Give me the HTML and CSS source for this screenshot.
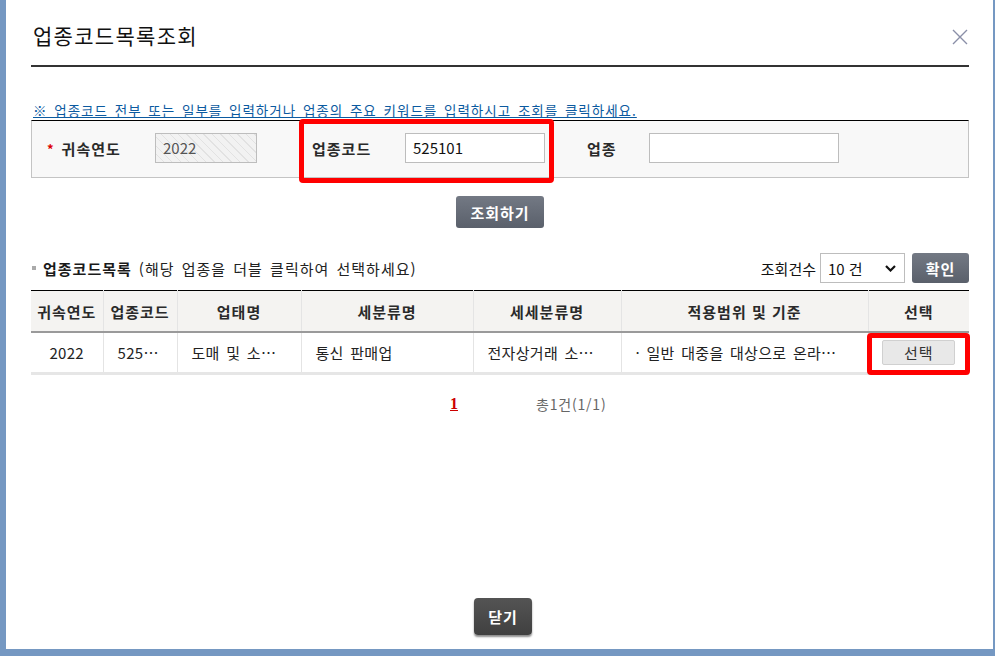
FILE: index.html
```html
<!DOCTYPE html>
<html lang="ko">
<head>
    <meta charset="UTF-8">
    <title>업종코드목록조회</title>
    <link rel="stylesheet" href="styles.css">
</head>
<body>

<div class="window">
    <div class="header">
        <div class="title">업종코드목록조회</div>
        <div class="close">
            <svg width="16" height="16" viewBox="0 0 16 16"><path d="M1 1 L15 15 M15 1 L1 15" stroke="#8a8fa8" stroke-width="1.4" fill="none"/></svg>
        </div>
    </div>

    <div class="notice">※ 업종코드 전부 또는 일부를 입력하거나 업종의 주요 키워드를 입력하시고 조회를 클릭하세요.</div>

    <div class="search-box">
        <div class="field">
            <div class="label label-year"><span class="req">*</span>귀속연도</div>
            <div class="input input-year readonly">2022</div>
        </div>
        <div class="field field-code">
            <div class="label label-code">업종코드</div>
            <div class="input input-code">525101</div>
        </div>
        <div class="field field-name">
            <div class="label label-name">업종</div>
            <div class="input input-name"></div>
        </div>
    </div>

    <div class="btn-row">
        <div class="btn btn-search">조회하기</div>
    </div>

    <div class="list-head">
        <div class="list-title"><span class="bullet"></span><b>업종코드목록</b> (해당 업종을 더블 클릭하여 선택하세요)</div>
        <div class="list-tools">
            <span class="count-label">조회건수</span>
            <div class="select">10 건
                <svg width="11" height="7" viewBox="0 0 11 7"><polyline points="1,1 5.5,5.5 10,1" stroke="#111" stroke-width="2.2" fill="none"/></svg>
            </div>
            <div class="btn btn-ok">확인</div>
        </div>
    </div>

    <table class="list-table">
        <colgroup>
            <col style="width: 72px">
            <col style="width: 74px">
            <col style="width: 124px">
            <col style="width: 172px">
            <col style="width: 148px">
            <col style="width: 247px">
            <col style="width: 101px">
        </colgroup>
        <thead>
            <tr>
                <th>귀속연도</th>
                <th>업종코드</th>
                <th>업태명</th>
                <th>세분류명</th>
                <th>세세분류명</th>
                <th>적용범위 및 기준</th>
                <th>선택</th>
            </tr>
        </thead>
        <tbody>
            <tr>
                <td class="center">2022</td>
                <td>525…</td>
                <td>도매 및 소…</td>
                <td>통신 판매업</td>
                <td>전자상거래 소…</td>
                <td>· 일반 대중을 대상으로 온라…</td>
                <td class="center"><span class="btn-pick">선택</span></td>
            </tr>
        </tbody>
    </table>

    <div class="paging">
        <span class="page-num">1</span>
        <span class="page-total">총1건(1/1)</span>
    </div>

    <div class="footer">
        <div class="btn btn-close">닫기</div>
    </div>

    <div class="mark mark-code"></div>
    <div class="mark mark-pick"></div>
</div>

</body>
</html>
```

FILE: styles.css
```css
body { margin: 0; background-color: #ffffff; font-family: "Noto Sans CJK KR", "Noto Sans", sans-serif; color: #222; }
.window { position: relative; width: 995px; height: 656px; box-sizing: border-box; border-left: 6px solid #7598c2; border-right: 2px solid #7598c2; border-bottom: 7px solid #7598c2; padding: 0 24px 0 25px; display: flex; flex-direction: column; background-color: #ffffff; }

.header { height: 67px; box-sizing: border-box; border-bottom: 2px solid #333; display: flex; justify-content: space-between; align-items: flex-start; padding-top: 21px; }
.title { font-size: 21px; line-height: 28px; letter-spacing: 1.3px; padding-left: 2px; color: #111; }
.close { margin-top: 5px; margin-right: 1px; width: 16px; height: 16px; }

.notice { margin-top: 34px; font-size: 13.5px; line-height: 18px; letter-spacing: 1px; word-spacing: 2px; color: #0b5aa0; text-decoration: underline; padding-left: 2px; }

.search-box { margin-top: 1px; display: flex; align-items: center; background-color: #f8f8f8; border: 1px solid #c4c4c4; border-top-color: #000; padding: 12px 15px 14px; }
.field { display: flex; align-items: center; }
.field-code { margin-left: 55px; }
.field-name { margin-left: 42px; }
.label { font-size: 15px; font-weight: bold; letter-spacing: 1px; color: #2a2a2a; }
.label-year { width: 108px; }
.label-code { width: 93px; }
.label-name { width: 62px; }
.req { color: #d00; font-size: 13px; margin-right: 7px; position: relative; top: -1px; }
.input { height: 30px; box-sizing: border-box; border: 1px solid #bdbdbd; background-color: #fff; font-size: 15px; line-height: 28px; padding: 0 7px; color: #111; }
.input-year { width: 102px; }
.input-code { width: 140px; }
.input-name { width: 190px; }
.readonly { color: #555; background-color: #f2f2f2; background-image: repeating-linear-gradient(45deg, #f2f2f2 0, #f2f2f2 5px, #e2e2e2 5px, #e2e2e2 6px); }

.btn { display: inline-flex; align-items: center; justify-content: center; box-sizing: border-box; color: #fff; font-weight: bold; font-size: 15px; letter-spacing: 1px; border-radius: 3px; background: linear-gradient(#737984, #5a606b); }
.btn-row { margin-top: 18px; display: flex; justify-content: center; }
.btn-search { width: 88px; height: 32px; }

.list-head { margin-top: 25px; height: 30px; display: flex; justify-content: space-between; align-items: center; }
.list-title { font-size: 15px; color: #222; display: flex; align-items: center; letter-spacing: 1px; word-spacing: 2px; }
.list-title b { letter-spacing: 1px; color: #1a1a1a; margin-right: 7px; }
.bullet { width: 4px; height: 4px; background-color: #aaa; margin: 0 7px 0 1px; }
.list-tools { display: flex; align-items: center; }
.count-label { font-size: 15px; margin-right: 4px; color: #111; }
.select { width: 85px; height: 30px; box-sizing: border-box; border: 1px solid #bdbdbd; display: flex; align-items: center; justify-content: space-between; padding: 0 8px 0 7px; font-size: 15px; color: #111; }
.btn-ok { width: 57px; height: 30px; margin-left: 7px; }

.list-table { margin-top: 7px; width: 938px; table-layout: fixed; border-collapse: collapse; border-top: 1px solid #000; }
.list-table th { height: 40px; padding: 0; background-color: #f4f3f1; font-size: 15px; letter-spacing: 1px; color: #2a2a2a; border-left: 1px solid #e4e4e4; border-bottom: 2px solid #9a9a9a; }
.list-table td { height: 39px; padding: 0 14px; font-size: 15px; color: #222; white-space: nowrap; overflow: hidden; border-left: 1px solid #e4e4e4; border-bottom: 3px solid #e6e6e6; letter-spacing: 0.3px; word-spacing: 2px; }
.list-table th:first-child, .list-table td:first-child { border-left: none; }
.list-table td.center { text-align: center; padding: 0; }
.btn-pick { display: inline-block; width: 73px; height: 25px; line-height: 24px; box-sizing: border-box; background-color: #e8e8e8; border: 1px solid #d0d0d0; border-radius: 2px; color: #333; letter-spacing: 1px; }

.paging { margin-top: 19px; display: flex; align-items: center; padding-left: 419px; height: 20px; }
.page-num { font-family: "Liberation Serif", serif; font-weight: bold; font-size: 16px; color: #c00; text-decoration: underline; }
.page-total { margin-left: 78px; font-size: 14px; letter-spacing: 0.8px; color: #666; }

.footer { margin-top: auto; padding-bottom: 14px; display: flex; justify-content: center; padding-left: 6px; }
.btn-close { width: 58px; height: 37px; border-radius: 4px; background: linear-gradient(#545454, #404040); box-shadow: 0 2px 2px rgba(0, 0, 0, 0.45); font-size: 15px; }

.mark { position: absolute; border: 5px solid #f00; border-radius: 4px; }
.mark-code { left: 293px; top: 119px; width: 245px; height: 54px; }
.mark-pick { left: 861px; top: 333px; width: 93px; height: 32px; }
```
